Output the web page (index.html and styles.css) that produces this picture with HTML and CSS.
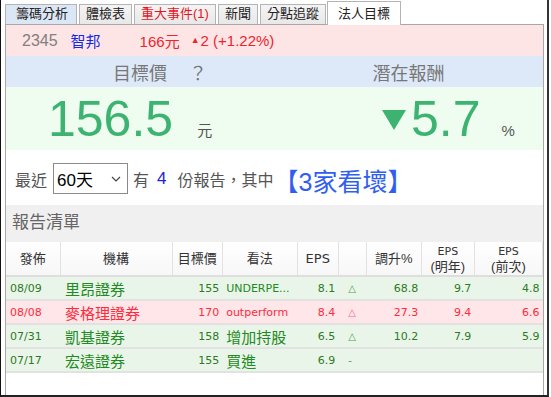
FILE: index.html
```html
<!DOCTYPE html>
<html lang="zh-Hant">
<head>
    <meta charset="UTF-8">
    <title>法人目標</title>
    <link rel="stylesheet" href="styles.css">
</head>
<body>
    <div class="frame">
        <div class="tabs">
            <span class="tab tab-hover">籌碼分析</span>
            <span class="tab">體檢表</span>
            <span class="tab tab-alert">重大事件(1)</span>
            <span class="tab">新聞</span>
            <span class="tab">分點追蹤</span>
            <span class="tab tab-active">法人目標</span>
        </div>
        <div class="panel">
            <div class="quote">
                <span class="code">2345</span>
                <span class="name">智邦</span>
                <span class="price">166元</span>
                <span class="change"><span class="up">▲</span>2 (+1.22%)</span>
            </div>

            <div class="labels">
                <div class="label">目標價<span class="help">？</span></div>
                <div class="label">潛在報酬</div>
            </div>

            <div class="figures">
                <div class="figure figure-target">
                    <span class="big">156.5</span><span class="unit">元</span>
                </div>
                <div class="figure figure-return">
                    <span class="down"></span><span class="big">5.7</span><span class="unit">%</span>
                </div>
            </div>

            <div class="filter">
                <span class="muted">最近</span>
                <div class="select">
                    <span>60天</span>
                    <svg width="10" height="6" viewBox="0 0 10 6"><path d="M1 1 L5 5 L9 1" fill="none" stroke="#444" stroke-width="1.2"/></svg>
                </div>
                <span class="muted">有</span>
                <span class="count">4</span>
                <span class="muted">份報告，其中</span>
                <span class="verdict">【3家看壞】</span>
            </div>

            <div class="section-title">報告清單</div>

            <table class="reports">
                <colgroup>
                    <col style="width: 54px">
                    <col style="width: 112px">
                    <col style="width: 50px">
                    <col style="width: 75px">
                    <col style="width: 41px">
                    <col style="width: 28px">
                    <col style="width: 55px">
                    <col style="width: 53px">
                    <col style="width: 68px">
                </colgroup>
                <thead>
                    <tr>
                        <th>發佈</th>
                        <th>機構</th>
                        <th>目標價</th>
                        <th>看法</th>
                        <th class="latin">EPS</th>
                        <th></th>
                        <th>調升%</th>
                        <th><span class="latin">EPS</span><br>(明年)</th>
                        <th><span class="latin">EPS</span><br>(前次)</th>
                    </tr>
                </thead>
                <tbody>
                    <tr class="row-good">
                        <td class="date">08/09</td>
                        <td class="broker">里昂證券</td>
                        <td class="num">155</td>
                        <td class="view latin">UNDERPE...</td>
                        <td class="num">8.1</td>
                        <td class="mark">△</td>
                        <td class="num">68.8</td>
                        <td class="num">9.7</td>
                        <td class="num">4.8</td>
                    </tr>
                    <tr class="row-bad">
                        <td class="date">08/08</td>
                        <td class="broker">麥格理證券</td>
                        <td class="num">170</td>
                        <td class="view latin">outperform</td>
                        <td class="num">8.4</td>
                        <td class="mark">△</td>
                        <td class="num">27.3</td>
                        <td class="num">9.4</td>
                        <td class="num">6.6</td>
                    </tr>
                    <tr class="row-good">
                        <td class="date">07/31</td>
                        <td class="broker">凱基證券</td>
                        <td class="num">158</td>
                        <td class="view">增加持股</td>
                        <td class="num">6.5</td>
                        <td class="mark">△</td>
                        <td class="num">10.2</td>
                        <td class="num">7.9</td>
                        <td class="num">5.9</td>
                    </tr>
                    <tr class="row-good">
                        <td class="date">07/17</td>
                        <td class="broker">宏遠證券</td>
                        <td class="num">155</td>
                        <td class="view">買進</td>
                        <td class="num">6.9</td>
                        <td class="mark">-</td>
                        <td class="num"></td>
                        <td class="num"></td>
                        <td class="num"></td>
                    </tr>
                </tbody>
            </table>
        </div>
    </div>
</body>
</html>
```

FILE: styles.css
```css
body {
    margin: 0;
    background: #fff;
    font-family: 'Liberation Sans', 'Noto Sans CJK TC', sans-serif;
    color: #333;
}

.frame {
    box-sizing: border-box;
    width: 549px;
    height: 397px;
    padding-left: 4px;
    border-left: 1px solid #111;
    border-right: 2px solid #333;
    border-bottom: 2px solid #222;
    overflow: hidden;
}

/* tab strip */
.tabs {
    display: flex;
    align-items: flex-end;
    height: 24px;
}

.tab {
    box-sizing: border-box;
    height: 20px;
    line-height: 18px;
    padding: 0 6px;
    margin-right: 2px;
    border: 1px solid #b4b4b4;
    border-bottom: none;
    background: linear-gradient(#f4f4f4, #e8e8e8);
    font-size: 13px;
    color: #222;
}

.tab-hover {
    background: #dce7f6;
    padding: 0 8px 0 10px;
}

.tab-alert {
    color: #e8141e;
}

.tab-active {
    position: relative;
    height: 24px;
    margin-left: -1px;
    margin-bottom: -1px;
    padding: 3px 10px 0;
    background: #fff;
    z-index: 1;
}

/* panel */
.panel {
    box-sizing: border-box;
    width: 539px;
    height: 372px;
    border: 1px solid #a8a8a8;
}

.quote {
    display: flex;
    align-items: center;
    height: 31px;
    padding-left: 16px;
    background: #fde5e5;
    font-size: 15px;
}

.code {
    color: #808080;
    font-size: 16px;
}

.name {
    margin-left: 13px;
    color: #1428e6;
}

.price {
    margin-left: 39px;
    color: #f0232d;
}

.change {
    margin-left: 11px;
    color: #f0232d;
}

.up {
    font-size: 9px;
    vertical-align: 3px;
    margin-right: 1px;
}

.labels {
    display: grid;
    grid-template-columns: 268px 1fr;
    height: 31px;
    background: #dde9f9;
}

.label {
    display: flex;
    justify-content: center;
    align-items: center;
    font-size: 18px;
    color: #777;
}

.help {
    margin-left: 22px;
    margin-right: -40px;
    width: 18px;
}

.figures {
    display: grid;
    grid-template-columns: 268px 1fr;
    height: 63px;
    background: #effdf0;
}

.figure {
    display: flex;
    align-items: baseline;
    padding-top: 4px;
}

.figure-target {
    padding-left: 42px;
}

.figure-return {
    padding-left: 108px;
}

.big {
    font-size: 50px;
    color: #3cb371;
    line-height: 56px;
}

.unit {
    margin-left: 24px;
    font-size: 15px;
    color: #555;
}

.figure-return .unit {
    margin-left: 21px;
}

.down {
    width: 0;
    height: 0;
    margin-right: 5px;
    border-left: 12px solid transparent;
    border-right: 12px solid transparent;
    border-top: 20px solid #3cb371;
    transform: translateY(-6px);
}

.filter {
    display: flex;
    align-items: center;
    height: 55px;
    padding-left: 9px;
    padding-top: 2px;
    box-sizing: border-box;
    font-size: 16px;
}

.muted {
    color: #555;
}

.select {
    box-sizing: border-box;
    display: flex;
    justify-content: space-between;
    align-items: center;
    width: 75px;
    height: 31px;
    margin: 0 5px 0 6px;
    padding: 0 6px 0 3px;
    border: 1px solid #8a8a8a;
    font-size: 17px;
    color: #000;
}

.count {
    margin: 0 11px 0 8px;
    color: #2020e0;
    font-size: 17px;
}

.verdict {
    font-size: 25px;
    color: #2f5ef0;
    margin-top: 2px;
}

.section-title {
    height: 37px;
    line-height: 35px;
    padding-left: 6px;
    background: #f0f0f0;
    font-size: 17px;
    color: #666;
}

/* report table */
.reports {
    width: 537px;
    border-collapse: collapse;
    table-layout: fixed;
}

.reports th {
    height: 33px;
    padding: 0;
    border: 1px solid #e2e2e2;
    border-top: none;
    border-bottom: 2px solid #dedede;
    background: linear-gradient(#fff, #f7f7f7);
    font-weight: normal;
    font-size: 13px;
    line-height: 15px;
    color: #333;
}

.reports th:first-child {
    border-left: none;
}

.latin {
    font-family: 'DejaVu Sans', sans-serif;
    font-size: 11px;
}

.reports td {
    height: 22px;
    padding: 0 3px;
    border-bottom: 2px solid #e2e2e2;
    font-family: 'DejaVu Sans', sans-serif;
    font-size: 11px;
    white-space: nowrap;
    overflow: hidden;
}

.reports td.date {
    padding-left: 4px;
}

.reports td.broker {
    padding-left: 5px;
    font-family: 'Noto Sans CJK TC', sans-serif;
    font-size: 15px;
}

.reports td.view {
    padding-left: 4px;
    font-family: 'Noto Sans CJK TC', sans-serif;
    font-size: 15px;
}

.reports td.view.latin {
    font-family: 'DejaVu Sans', sans-serif;
    font-size: 11px;
    padding-right: 0;
}

.reports td.num {
    text-align: right;
}

.reports td.mark {
    padding-left: 10px;
    font-size: 10px;
}

.row-good {
    background: #eaf5ea;
    color: #2c7a24;
}

.row-good .broker,
.row-good .view {
    color: #228a22;
}

.row-good .mark {
    color: #5aa05a;
}

.row-bad {
    background: #ffe6e9;
    color: #ff2a3c;
}

.row-bad .mark {
    color: #ff6a80;
}
```
